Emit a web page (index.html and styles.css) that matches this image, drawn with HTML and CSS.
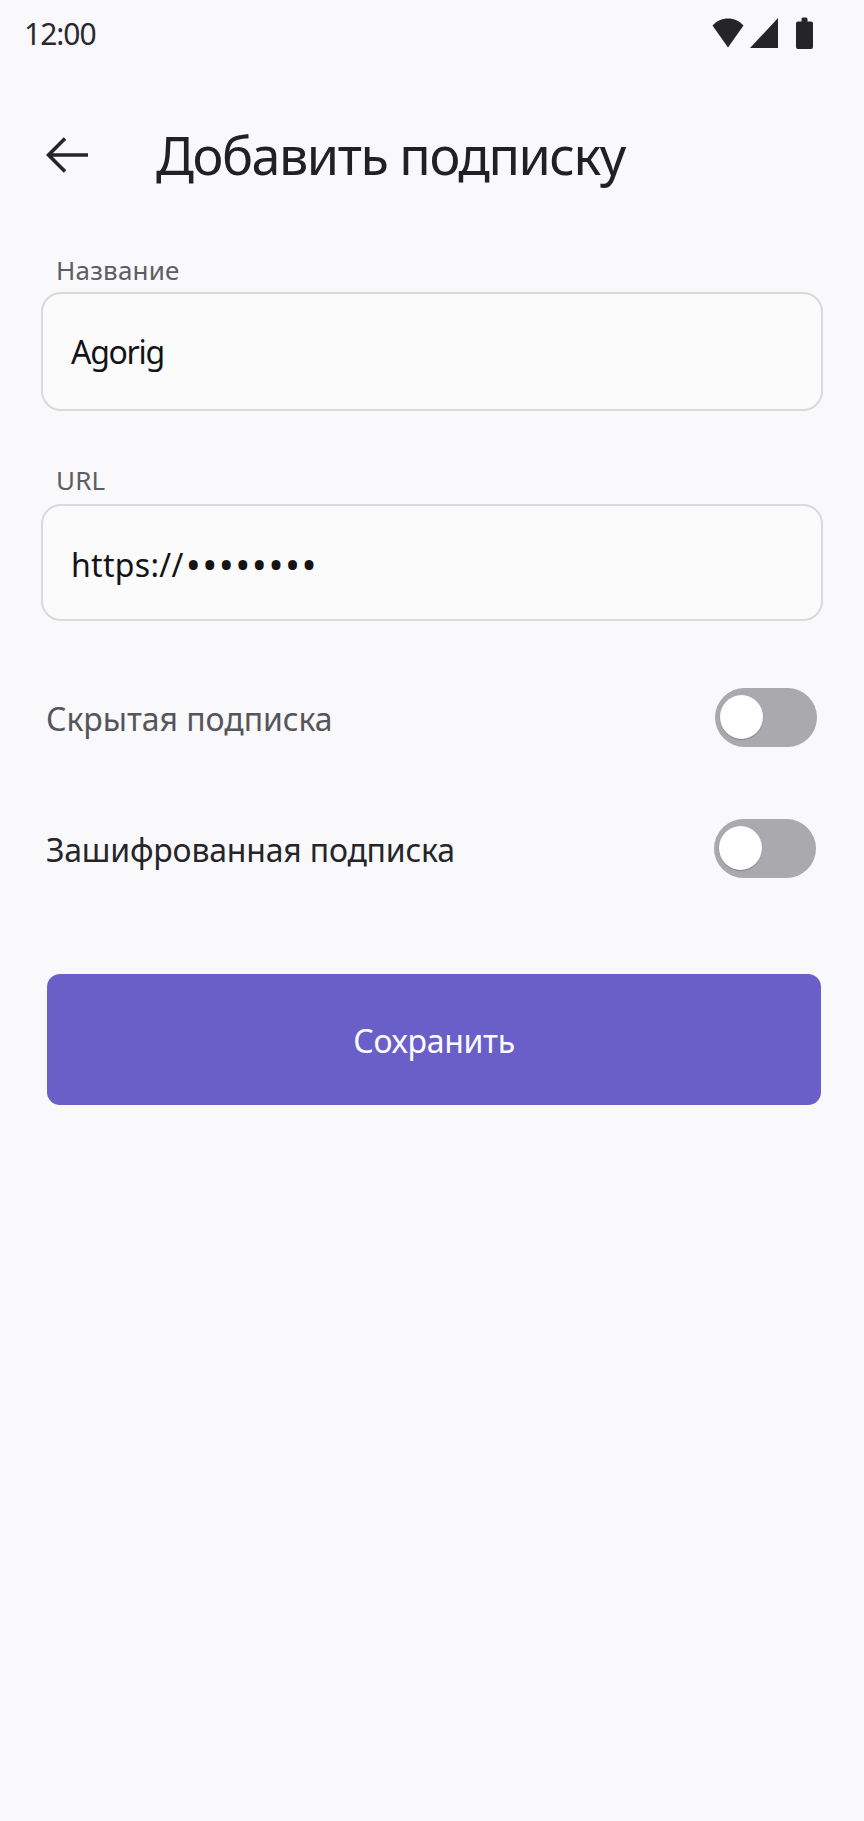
FILE: index.html
```html
<!DOCTYPE html>
<html lang="ru">
<head>
<meta charset="utf-8">
<title>Добавить подписку</title>
<link rel="stylesheet" href="styles.css">
</head>
<body>
<div class="screen">
  <div class="status">
    <span class="time">12:00</span>
    <div class="status-icons">
      <svg class="i-wifi" viewBox="0 0 32 30"><path d="M0.500 7.500C4.500 3 10 0.500 16 0.500S27.500 3 31.500 7.500L16 29.500Z" fill="#252528"/></svg>
      <svg class="i-signal" viewBox="0 0 28 30"><path d="M0 30L28 0V30Z" fill="#252528"/></svg>
      <svg class="i-batt" viewBox="0 0 17 32"><path d="M5.500 2Q5.500 0.500 7 0.500H10Q11.500 0.500 11.500 2V4.500H15Q17 4.500 17 6.500V30Q17 32 15 32H2Q0 32 0 30V6.500Q0 4.500 2 4.500H5.500Z" fill="#252528"/></svg>
    </div>
  </div>
  <header class="appbar">
    <svg class="back" viewBox="0 0 44 38"><path d="M42 19H3M19 2.500L2.500 19L19 35.500" fill="none" stroke="#26262a" stroke-width="3.600"/></svg>
    <h1 class="title">Добавить подписку</h1>
  </header>
  <form class="form">
    <div class="field">
      <label class="label">Название</label>
      <div class="input"><span class="value name">Agorig</span></div>
    </div>
    <div class="field field-url">
      <label class="label">URL</label>
      <div class="input"><span class="value url">https://<span class="dots">••••••••</span></span></div>
    </div>
    <div class="row row-first">
      <span class="row-text muted">Скрытая подписка</span>
      <span class="toggle"><span class="knob"></span></span>
    </div>
    <div class="row row-second">
      <span class="row-text">Зашифрованная подписка</span>
      <span class="toggle"><span class="knob"></span></span>
    </div>
    <button class="save" type="button">Сохранить</button>
  </form>
</div>
</body>
</html>
```
FILE: styles.css
```css
* { box-sizing: border-box; }
html, body { margin: 0; padding: 0; }
body {
  width: 864px;
  height: 1821px;
  background: #f9f9fb;
  font-family: "Noto Sans", "Open Sans", sans-serif;
  color: #212124;
  overflow: hidden;
}
.screen { width: 864px; height: 1821px; }
.status {
  height: 66px;
  padding: 0 51px 0 24px;
  display: flex;
  align-items: center;
  justify-content: space-between;
}
.time { font-size: 30px; color: #2a2a2e; letter-spacing: -1px; }
.status-icons { display: flex; align-items: center; }
.i-wifi { width: 32px; height: 30px; display: block; margin-right: 6px; }
.i-signal { width: 28px; height: 30px; display: block; margin-right: 18px; }
.i-batt { width: 17px; height: 32px; display: block; }
.appbar {
  height: 108px;
  margin-top: 35px;
  padding-left: 46px;
  display: flex;
  align-items: center;
  gap: 66px;
}
.back { width: 44px; height: 38px; display: block; flex: none; }
.title { margin: 0; font-size: 52px; font-weight: 400; color: #212124; line-height: 60px; letter-spacing: -1.45px; }
.form { display: flex; flex-direction: column; padding: 0 41px; margin-top: 79px; }
.field { display: flex; flex-direction: column; margin-bottom: 51px; }
.label { font-size: 26px; line-height: 36px; color: #5d5d63; padding-left: 15px; margin-top: -36px; margin-bottom: 4px; height: 36px; letter-spacing: 0.2px; }
.field-url { margin-bottom: 53px; }
.field-url .label { margin-top: 0; margin-bottom: 6px; }
.input {
  height: 119px;
  border: 2px solid #d9d9dd;
  border-radius: 20px;
  background: #fbfbfc;
  padding-left: 28px;
  display: flex;
  align-items: center;
  font-size: 32px;
  color: #141416;
}
.field-url .input { height: 117px; }
.value { line-height: 44px; }
.name { letter-spacing: -1.3px; }
.url { letter-spacing: 0.3px; padding-top: 4px; }
.dots { font-size: 40px; line-height: 1; letter-spacing: 1.5px; margin-left: 2px; vertical-align: -3px; }
.row { display: flex; align-items: center; justify-content: space-between; padding-left: 5px; height: 60px; }
.row-first { margin-top: 13px; padding-right: 6px; }
.row-second { margin-top: 71px; padding-right: 7px; }
.row-text { font-size: 32px; color: #26262a; letter-spacing: -0.2px; padding-top: 2px; }
.muted { color: #55555b; letter-spacing: -0.05px; }
.toggle {
  width: 102px;
  height: 59px;
  border-radius: 30px;
  background: #a9a9ae;
  display: flex;
  align-items: center;
  padding-left: 5px;
}
.knob { width: 43px; height: 44px; border-radius: 50%; background: #ffffff; box-shadow: 0 1px 1px rgba(60, 60, 66, 0.35); }
.save {
  margin: 96px 2px 0 6px;
  height: 131px;
  padding: 2px 0 0;
  border: 0;
  border-radius: 13px;
  background: #6a5fc8;
  color: #fbfbff;
  font-family: inherit;
  font-size: 32px;
  letter-spacing: -0.3px;
}
```
